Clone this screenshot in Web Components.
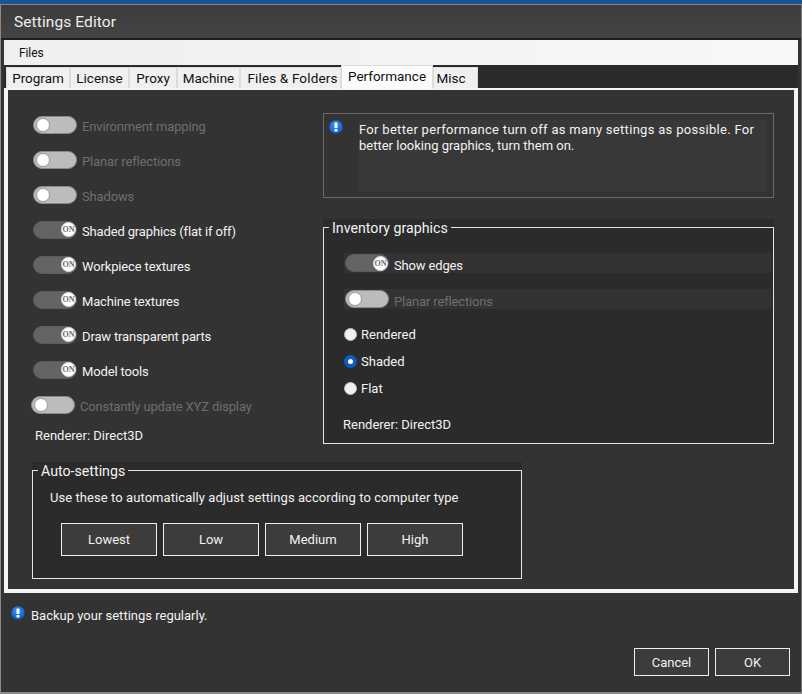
<!DOCTYPE html>
<html>
<head>
<meta charset="utf-8">
<title>Settings Editor</title>
<style>
  html, body { margin: 0; padding: 0; background: #333; overflow: hidden; }
  body { font-family: Roboto, "Liberation Sans", sans-serif; font-size: 13px; color: #f2f2f2; }
</style>
</head>
<body>
<settings-window>
  <menu-strip slot="menu">Files</menu-strip>
  <tab-strip slot="tabs">
    <tab-item w="64">Program</tab-item>
    <tab-item w="59">License</tab-item>
    <tab-item w="48">Proxy</tab-item>
    <tab-item w="63">Machine</tab-item>
    <tab-item w="101" spread style="padding-left:4px">Files &amp; Folders</tab-item>
    <tab-item w="92" active>Performance</tab-item>
    <tab-item w="45" style="padding-right:9px">Misc</tab-item>
  </tab-strip>

  <div slot="left">
    <toggle-row disabled>Environment mapping</toggle-row>
    <toggle-row disabled>Planar reflections</toggle-row>
    <toggle-row disabled>Shadows</toggle-row>
    <toggle-row on>Shaded graphics (flat if off)</toggle-row>
    <toggle-row on>Workpiece textures</toggle-row>
    <toggle-row on>Machine textures</toggle-row>
    <toggle-row on>Draw transparent parts</toggle-row>
    <toggle-row on>Model tools</toggle-row>
    <toggle-row disabled nudge>Constantly update XYZ display</toggle-row>
  </div>
  <renderer-label slot="left-foot" style="margin-left:2px">Renderer: Direct3D</renderer-label>

  <info-note slot="right">For better performance turn off as many settings as possible. For better looking graphics, turn them on.</info-note>
  <group-box slot="right" legend="Inventory graphics" style="height:225px;margin-top:21px">
    <div style="padding:18px 2px 0 20px">
      <toggle-row on band>Show edges</toggle-row>
      <toggle-row disabled band style="margin-top:16px">Planar reflections</toggle-row>
      <div style="margin-top:12px">
        <radio-row>Rendered</radio-row>
        <radio-row checked>Shaded</radio-row>
        <radio-row>Flat</radio-row>
      </div>
      <renderer-label style="margin-top:9px;margin-left:-1px">Renderer: Direct3D</renderer-label>
    </div>
  </group-box>

  <group-box slot="auto" legend="Auto-settings" style="width:490px;height:117px">
    <div style="padding:12px 0 0 17px;letter-spacing:.07px">Use these to automatically adjust settings according to computer type</div>
    <div style="display:flex;gap:6px;padding:18px 0 0 28px">
      <flat-button w="96" h="33">Lowest</flat-button>
      <flat-button w="96" h="33">Low</flat-button>
      <flat-button w="96" h="33">Medium</flat-button>
      <flat-button w="96" h="33">High</flat-button>
    </div>
  </group-box>

  <info-icon slot="foot-icon"></info-icon>
  <span slot="foot-text">Backup your settings regularly.</span>
  <flat-button slot="actions" w="75" h="28">Cancel</flat-button>
  <flat-button slot="actions" w="75" h="28">OK</flat-button>
</settings-window>

<script>
class SettingsWindow extends HTMLElement {
  constructor() {
    super();
    this.attachShadow({mode: 'open'}).innerHTML = `
    <style>
      :host { display: flex; flex-direction: column; width: 802px; height: 694px; box-sizing: border-box;
              background: #333; border-top: 4px solid #1c5299; }
      .frame { flex: 1; display: flex; flex-direction: column; border: 1px solid #8a8a8a; border-right-color: #777; border-bottom: 2px solid #8a8a8a; min-height: 0; }
      .title { height: 33px; flex: none; background: linear-gradient(#3c3c3c, #444); border-bottom: 2px solid #1f1f1f;
               box-sizing: content-box; display: flex; align-items: center; padding-left: 13px;
               font-size: 15.5px; color: #eee; letter-spacing: .1px; }
      .body { flex: 1; padding: 0 3px; display: flex; flex-direction: column; min-height: 0; }
      .panel { height: 505px; box-sizing: border-box; flex: none; background: #333; border: 4px solid #f4f4f4; border-top-width: 2px;
               display: grid; grid-template-columns: 315px 451px; grid-template-rows: 372px auto; }
      .left { padding-top: 17px; padding-left: 25px; }
      .right { padding-top: 23px; }
      .auto { grid-column: 1 / 3; padding: 0 0 0 24px; }
      .foot { display: flex; align-items: flex-start; padding: 13px 0 0 7px; gap: 6px; height: 21px; }
      .foot-text { line-height: 19px; }
      .actions { display: flex; justify-content: flex-end; gap: 6px; padding: 21px 8px 0 0; }
    </style>
    <div class="frame">
      <div class="title">Settings Editor</div>
      <div class="body">
        <slot name="menu"></slot>
        <slot name="tabs"></slot>
        <div class="panel">
          <div class="left"><slot name="left"></slot><slot name="left-foot"></slot></div>
          <div class="right"><slot name="right"></slot></div>
          <div class="auto"><slot name="auto"></slot></div>
        </div>
        <div class="foot"><slot name="foot-icon"></slot><span class="foot-text"><slot name="foot-text"></slot></span></div>
        <div class="actions"><slot name="actions"></slot></div>
      </div>
    </div>`;
  }
}

class MenuStrip extends HTMLElement {
  constructor() {
    super();
    this.attachShadow({mode: 'open'}).innerHTML = `
    <style>
      :host { display: flex; align-items: center; height: 25px; box-sizing: border-box; background: linear-gradient(90deg, #efefef, #f8f8f8);
              color: #111; font-size: 12px; letter-spacing: -.1px; padding: 1px 0 0 15px; }
    </style><slot></slot>`;
  }
}

class TabStrip extends HTMLElement {
  constructor() {
    super();
    this.attachShadow({mode: 'open'}).innerHTML = `
    <style>
      :host { display: flex; align-items: flex-end; height: 23px; background: #2b2b2b; padding-left: 2px; }
    </style><slot></slot>`;
  }
}

class TabItem extends HTMLElement {
  constructor() {
    super();
    const active = this.hasAttribute('active');
    this.attachShadow({mode: 'open'}).innerHTML = `
    <style>
      :host { display: flex; align-items: center; justify-content: center; box-sizing: border-box;
              width: ${this.getAttribute('w')}px; height: ${active ? 24 : 21}px; color: #111; font-size: 13.5px;
              ${this.hasAttribute('spread') ? 'letter-spacing:.15px;' : ''}
              background: ${active ? '#fbfbfb' : '#f0f0f0'}; border: 1px solid #dcdcdc; border-bottom: 0;
              ${active ? 'margin-bottom:-1px; padding-bottom:3px; position:relative;' : ''} }
    </style><slot></slot>`;
  }
}

class ToggleRow extends HTMLElement {
  constructor() {
    super();
    const on = this.hasAttribute('on');
    const band = this.hasAttribute('band');
    const nudge = this.hasAttribute('nudge');
    this.attachShadow({mode: 'open'}).innerHTML = `
    <style>
      :host { display: flex; align-items: center; gap: 5px; color: ${on ? '#f2f2f2' : '#6e6e6e'};
              height: ${band ? 20 : 35}px; ${band ? 'background:#333; padding-left:1px;' : ''}
              ${nudge ? 'margin-left:-2px;' : ''} }
      .track { width: 44px; height: 18px; box-sizing: border-box; border-radius: 9px; flex: none;
               display: flex; align-items: center; padding: 0 0 0 2px;
               justify-content: ${on ? 'flex-end' : 'flex-start'};
               background: ${on ? '#646464' : '#bcbcbc'}; border: 1px solid ${on ? '#5c5c5c' : '#8a8a8a'}; }
      .thumb { width: ${on ? 15 : 14}px; height: ${on ? 15 : 14}px; border-radius: 50%; background: #fff; box-sizing: border-box;
               border: 1px solid ${on ? '#ddd' : '#999'}; display: flex; align-items: center; justify-content: center;
               font: bold 8px "Liberation Serif", serif; color: #6a6a6a; }
      .label { padding-top: 4px; letter-spacing: -.15px; }
    </style>
    <span class="track"><span class="thumb">${on ? 'ON' : ''}</span></span><span class="label"><slot></slot></span>`;
  }
}

class RadioRow extends HTMLElement {
  constructor() {
    super();
    const checked = this.hasAttribute('checked');
    this.attachShadow({mode: 'open'}).innerHTML = `
    <style>
      :host { display: flex; align-items: center; gap: 4px; height: 27px; color: #f2f2f2; }
      .dot { width: 13px; height: 13px; border-radius: 50%; box-sizing: border-box; flex: none;
             background: ${checked ? '#fff' : '#f1f1f1'}; border: ${checked ? '4px solid #0a5fbe' : '1px solid #bbb'}; }
    </style>
    <span class="dot"></span><span><slot></slot></span>`;
  }
}

class GroupBox extends HTMLElement {
  constructor() {
    super();
    this.attachShadow({mode: 'open'}).innerHTML = `
    <style>
      :host { display: block; background: #2b2b2b; box-sizing: border-box; color: #f2f2f2; }
      fieldset { margin: 0; padding: 0; height: 100%; box-sizing: border-box; border: 1px solid #e4e4e4; }
      legend { margin-left: 5px; padding: 0 3px; line-height: 16px; font-size: 14.2px; position: relative; top: 1px; }
    </style>
    <fieldset><legend>${this.getAttribute('legend')}</legend><slot></slot></fieldset>`;
  }
}

class InfoIcon extends HTMLElement {
  constructor() {
    super();
    this.attachShadow({mode: 'open'}).innerHTML = `
    <style>:host { display: block; width: 14px; height: 14px; flex: none; } svg { display: block; }</style>
    <svg width="14" height="14" viewBox="0 0 14 14">
      <defs><radialGradient id="g" cx=".45" cy=".35" r=".75"><stop offset="0" stop-color="#3a94f5"/><stop offset=".7" stop-color="#1268d8"/><stop offset="1" stop-color="#0a3fa0"/></radialGradient></defs>
      <circle cx="7" cy="7" r="6.7" fill="url(#g)"/>
      <rect x="5.5" y="2.5" width="3" height="5.6" rx=".9" fill="#fff"/>
      <rect x="5.5" y="9" width="3" height="2.6" rx=".7" fill="#fff"/>
    </svg>`;
  }
}

class InfoNote extends HTMLElement {
  constructor() {
    super();
    this.attachShadow({mode: 'open'}).innerHTML = `
    <style>
      :host { display: flex; height: 85px; box-sizing: border-box; border: 1px solid #6a6a6a; padding: 6px 6px 5px 5px; gap: 16px; }
      .text { flex: 1; background: #383838; line-height: 16px; padding-top: 2px; color: #f2f2f2; }
      .text::first-line { letter-spacing: .3px; }
    </style>
    <info-icon></info-icon><div class="text"><slot></slot></div>`;
  }
}

class FlatButton extends HTMLElement {
  constructor() {
    super();
    this.attachShadow({mode: 'open'}).innerHTML = `
    <style>
      :host { display: flex; align-items: center; justify-content: center; box-sizing: border-box; flex: none;
              width: ${this.getAttribute('w')}px; height: ${this.getAttribute('h')}px;
              background: #3c3c3c; border: 1px solid #eee; color: #f2f2f2; }
    </style><slot></slot>`;
  }
}

class RendererLabel extends HTMLElement {
  constructor() {
    super();
    this.attachShadow({mode: 'open'}).innerHTML = `
    <style>:host { display: block; line-height: 28px; color: #f2f2f2; }</style><slot></slot>`;
  }
}

customElements.define('info-icon', InfoIcon);
customElements.define('settings-window', SettingsWindow);
customElements.define('menu-strip', MenuStrip);
customElements.define('tab-strip', TabStrip);
customElements.define('tab-item', TabItem);
customElements.define('toggle-row', ToggleRow);
customElements.define('radio-row', RadioRow);
customElements.define('group-box', GroupBox);
customElements.define('info-note', InfoNote);
customElements.define('flat-button', FlatButton);
customElements.define('renderer-label', RendererLabel);
</script>
</body>
</html>
